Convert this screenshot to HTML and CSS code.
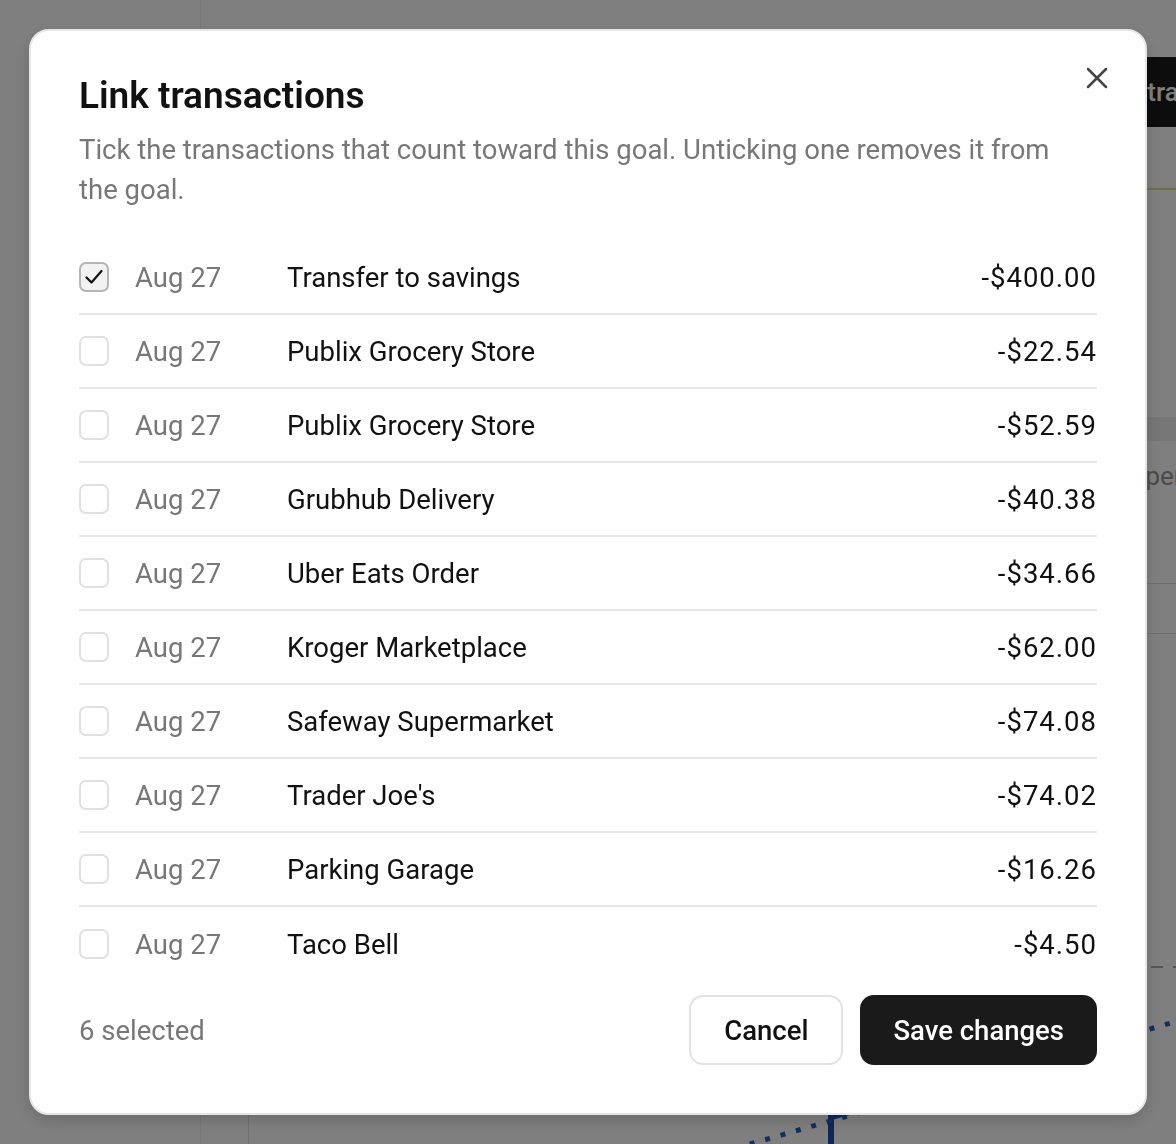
FILE: index.html
```html
<!DOCTYPE html>
<html lang="en">
<head>
  <meta charset="UTF-8">
  <meta name="viewport" content="width=device-width, initial-scale=1.0">
  <title>Goal – Link transactions</title>
  <link rel="stylesheet" href="styles.css">
</head>
<body>

  <!-- page behind the dialog -->
  <div class="app">
    <aside class="sidebar"></aside>
    <main class="main">
      <header class="main-head">
        <button class="btn-dark">Link transactions</button>
      </header>
      <div class="goal-bar"></div>
      <div class="table-head"></div>
      <div class="table-row first"><span class="table-label">Spending</span></div>
      <div class="table-row"></div>
      <div class="table-row short"></div>
      <div class="chart">
        <svg class="chart-svg" width="1120" height="300" viewBox="0 0 1120 300">
          <line x1="0" y1="66" x2="1120" y2="66" stroke="#aaa" stroke-width="2" stroke-dasharray="12 10" />
          <line x1="582" y1="214" x2="582" y2="300" stroke="#111" stroke-width="4" />
          <path d="M582 300 L582 216 L600 211" fill="none" stroke="#1f4fb0" stroke-width="6" />
          <line x1="470" y1="252" x2="1120" y2="65" stroke="#2a5fb8" stroke-width="5" stroke-dasharray="5 11" />
        </svg>
      </div>
    </main>
  </div>

  <!-- dialog: link transactions -->
  <div class="backdrop">
    <div class="modal" role="dialog" aria-labelledby="modal-title">
      <button class="modal-close" aria-label="Close">
        <svg width="22" height="22" viewBox="0 0 22 22">
          <path d="M2 2 L20 20 M20 2 L2 20" stroke="#444" stroke-width="2.5" stroke-linecap="round" />
        </svg>
      </button>

      <h2 id="modal-title" class="modal-title">Link transactions</h2>
      <p class="modal-desc">Tick the transactions that count toward this goal. Unticking one removes it from the goal.</p>

      <ul class="tx-list">
        <li class="tx-row">
          <span class="check checked">
            <svg width="22" height="22" viewBox="0 0 22 22"><path d="M3.5 11.5 L8.5 16.5 L18.5 5" fill="none" stroke="#111" stroke-width="2.2" stroke-linecap="round" stroke-linejoin="round" /></svg>
          </span>
          <span class="tx-date">Aug 27</span>
          <span class="tx-name">Transfer to savings</span>
          <span class="tx-amount">-$400.00</span>
        </li>
        <li class="tx-row">
          <span class="check"></span>
          <span class="tx-date">Aug 27</span>
          <span class="tx-name">Publix Grocery Store</span>
          <span class="tx-amount">-$22.54</span>
        </li>
        <li class="tx-row">
          <span class="check"></span>
          <span class="tx-date">Aug 27</span>
          <span class="tx-name">Publix Grocery Store</span>
          <span class="tx-amount">-$52.59</span>
        </li>
        <li class="tx-row">
          <span class="check"></span>
          <span class="tx-date">Aug 27</span>
          <span class="tx-name">Grubhub Delivery</span>
          <span class="tx-amount">-$40.38</span>
        </li>
        <li class="tx-row">
          <span class="check"></span>
          <span class="tx-date">Aug 27</span>
          <span class="tx-name">Uber Eats Order</span>
          <span class="tx-amount">-$34.66</span>
        </li>
        <li class="tx-row">
          <span class="check"></span>
          <span class="tx-date">Aug 27</span>
          <span class="tx-name">Kroger Marketplace</span>
          <span class="tx-amount">-$62.00</span>
        </li>
        <li class="tx-row">
          <span class="check"></span>
          <span class="tx-date">Aug 27</span>
          <span class="tx-name">Safeway Supermarket</span>
          <span class="tx-amount">-$74.08</span>
        </li>
        <li class="tx-row">
          <span class="check"></span>
          <span class="tx-date">Aug 27</span>
          <span class="tx-name">Trader Joe's</span>
          <span class="tx-amount">-$74.02</span>
        </li>
        <li class="tx-row">
          <span class="check"></span>
          <span class="tx-date">Aug 27</span>
          <span class="tx-name">Parking Garage</span>
          <span class="tx-amount">-$16.26</span>
        </li>
        <li class="tx-row">
          <span class="check"></span>
          <span class="tx-date">Aug 27</span>
          <span class="tx-name">Taco Bell</span>
          <span class="tx-amount">-$4.50</span>
        </li>
      </ul>

      <div class="modal-foot">
        <span class="selected-count">6 selected</span>
        <div class="actions">
          <button class="btn btn-ghost">Cancel</button>
          <button class="btn btn-primary">Save changes</button>
        </div>
      </div>
    </div>
  </div>

</body>
</html>
```

FILE: styles.css
```css
body {
  margin: 0;
  font-family: Roboto, "Liberation Sans", sans-serif;
  background-color: #fff;
  color: #111;
  overflow: hidden;
}

/* page behind the dialog */
.app {
  display: flex;
  width: 1360px;
  height: 1144px;
}

.sidebar {
  width: 200px;
  flex-shrink: 0;
  border-right: 1px solid #eee;
}

.main {
  flex: 1;
  min-width: 0;
  overflow: hidden;
  padding: 57px 40px 0 47px;
}

.main-head {
  display: flex;
  justify-content: flex-end;
}

.btn-dark {
  height: 70px;
  padding: 0 28px;
  border: none;
  border-radius: 14px;
  background-color: #1a1a1a;
  color: #fff;
  font-family: inherit;
  font-size: 26px;
  font-weight: 500;
  white-space: nowrap;
}

.goal-bar {
  margin-top: 61px;
  height: 2px;
  background-color: #dcdf86;
}

.table-head {
  margin-top: 227px;
  height: 24px;
  background-color: #eee;
}

.table-row {
  height: 72px;
  border-bottom: 1px solid #ddd;
  display: flex;
  align-items: center;
}

.table-row.first {
  height: 70px;
  border-bottom: none;
}

.table-row.short {
  height: 49px;
}

.table-label {
  font-size: 26px;
  color: #999;
  margin-left: 882px;
  white-space: nowrap;
}

.chart {
  margin-top: 267px;
  border-left: 1px solid #e4e4e4;
  height: 300px;
}

.chart-svg {
  display: block;
}

/* dialog */
.backdrop {
  position: fixed;
  inset: 0;
  background-color: rgba(0, 0, 0, 0.5);
}

.modal {
  position: absolute;
  left: 29px;
  top: 29px;
  width: 1118px;
  box-sizing: border-box;
  padding: 48px;
  background-color: #fff;
  border: 2px solid #e6e6e6;
  border-radius: 20px;
  box-shadow: 0 6px 16px rgba(0, 0, 0, 0.15);
}

.modal-close {
  position: absolute;
  top: 27px;
  right: 28px;
  width: 40px;
  height: 40px;
  border: none;
  background: none;
  padding: 0;
  display: flex;
  align-items: center;
  justify-content: center;
}

.modal-title {
  margin: 0;
  font-size: 37px;
  line-height: 34px;
  font-weight: 600;
  color: #111;
}

.modal-desc {
  margin: 17px 0 0;
  max-width: 1000px;
  font-size: 27.5px;
  line-height: 40px;
  color: #777;
}

.tx-list {
  list-style: none;
  margin: 31px 0 0;
  padding: 0;
}

.tx-row {
  display: grid;
  grid-template-columns: 30px 126px 1fr auto;
  column-gap: 26px;
  align-items: center;
  height: 74px;
  box-sizing: border-box;
  border-bottom: 2px solid #e6e6e6;
  font-size: 27.5px;
}

.tx-row:last-child {
  border-bottom: none;
}

.check {
  width: 30px;
  height: 30px;
  box-sizing: border-box;
  border: 2px solid #e0e0e0;
  border-radius: 7px;
  background-color: #fff;
  display: flex;
  align-items: center;
  justify-content: center;
}

.check.checked {
  border-color: #b5b5b5;
  background-color: #f2f2f2;
}

.tx-date {
  color: #777;
}

.tx-name {
  color: #111;
}

.tx-amount {
  color: #111;
  text-align: right;
  letter-spacing: 1px;
}

.modal-foot {
  margin-top: 14px;
  display: flex;
  align-items: center;
  justify-content: space-between;
}

.selected-count {
  font-size: 27.5px;
  color: #777;
}

.actions {
  display: flex;
  gap: 17px;
}

.btn {
  height: 70px;
  padding: 0 33px;
  border-radius: 14px;
  font-family: inherit;
  font-size: 27.5px;
  font-weight: 500;
  cursor: pointer;
}

.btn-ghost {
  background-color: #fff;
  color: #111;
  border: 2px solid #e2e2e2;
}

.btn-primary {
  background-color: #1a1a1a;
  color: #fff;
  border: none;
}
```
